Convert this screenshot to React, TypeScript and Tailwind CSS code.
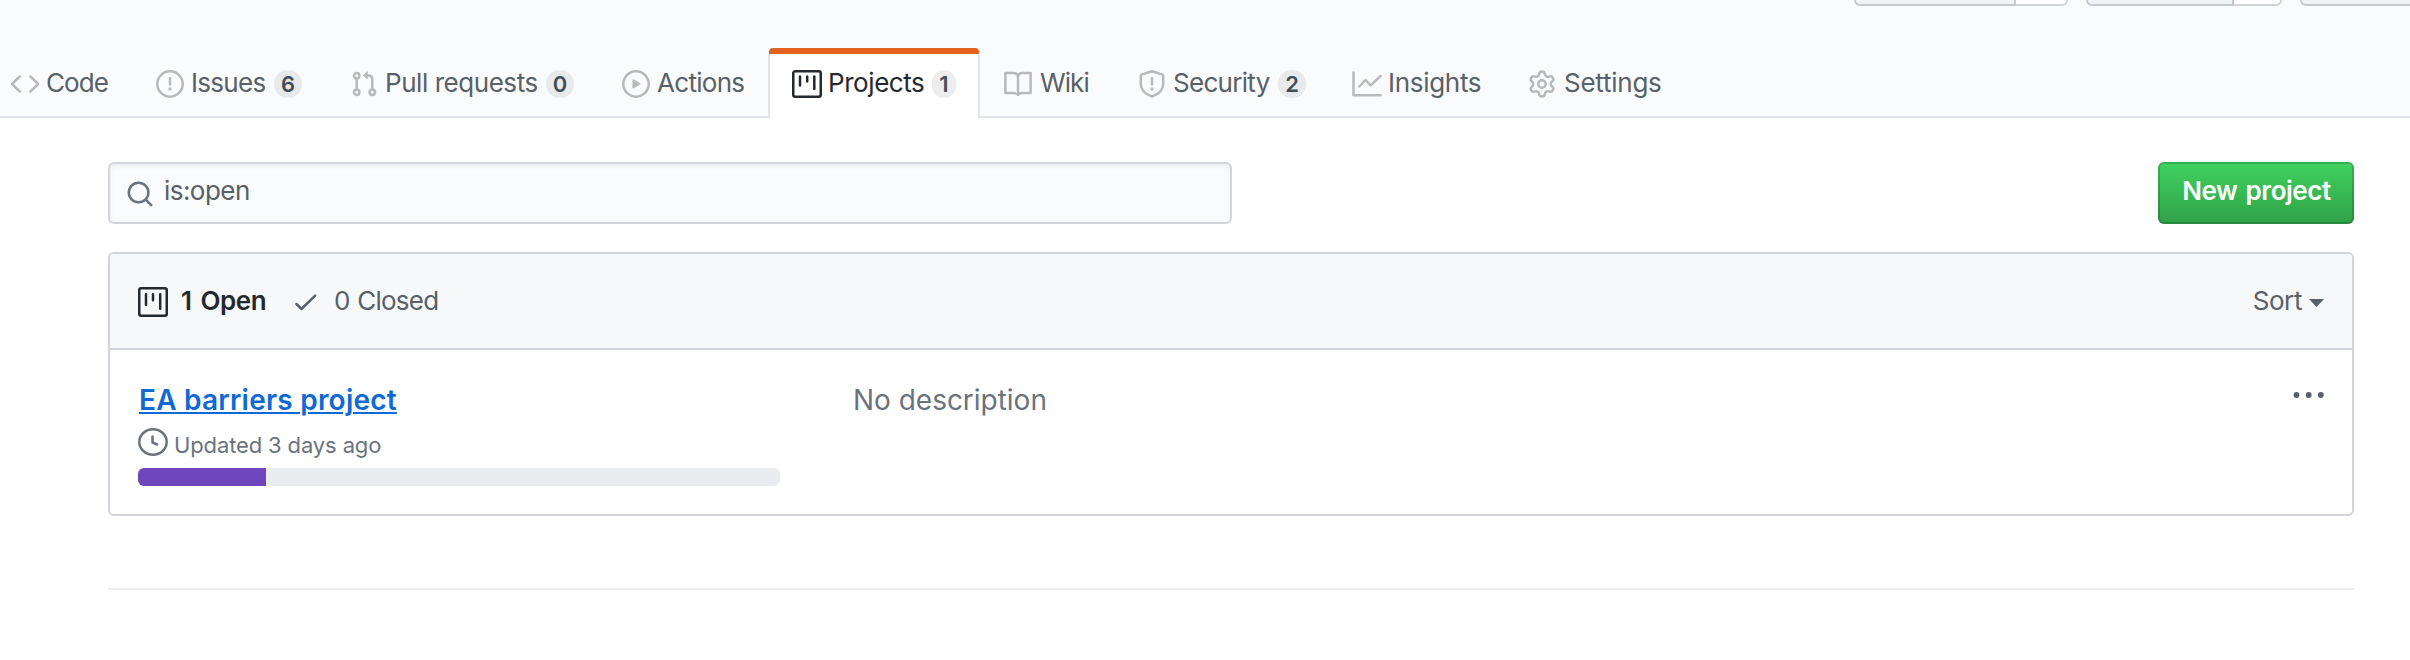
import type { ReactNode } from 'react';
import { Settings } from 'lucide-react';

function Icon({ w, children, className = '' }: { w: number; children: ReactNode; className?: string }) {
  return (
    <svg
      width={w}
      height={30}
      viewBox={`0 0 ${w} 30`}
      fill="none"
      stroke="currentColor"
      strokeWidth={2.5}
      strokeLinecap="round"
      strokeLinejoin="round"
      className={`block shrink-0 ${className}`}
    >
      {children}
    </svg>
  );
}

type Tab = {
  label: string;
  item: string;
  text: string;
  icon: ReactNode;
  count?: string;
  badge?: string;
  active?: boolean;
};

const tabs: Tab[] = [
  {
    label: 'Code',
    item: 'w-[146px]',
    text: 'ml-[6px] tracking-[-0.9px]',
    icon: (
      <Icon w={30}>
        <path d="M9.8 7.5 2 15l7.8 7.5M20.4 7.5 28.2 15l-7.8 7.5" />
      </Icon>
    ),
  },
  {
    label: 'Issues',
    item: 'w-[194px]',
    text: 'ml-[7px] w-[83px] tracking-[-0.7px]',
    count: '6',
    badge: 'w-7',
    icon: (
      <Icon w={28}>
        <circle cx="14" cy="15" r="12.7" />
        <path d="M14 9.2v6.3" />
        <circle cx="14" cy="20" r="1.7" fill="currentColor" stroke="none" />
      </Icon>
    ),
  },
  {
    label: 'Pull requests',
    item: 'w-[272px]',
    text: 'ml-[7px] w-[161px] tracking-[-0.45px]',
    count: '0',
    badge: 'w-7',
    icon: (
      <Icon w={28}>
        <circle cx="6.7" cy="6.7" r="2.7" />
        <circle cx="6.7" cy="23.3" r="2.7" />
        <circle cx="22.3" cy="23.3" r="2.7" />
        <path d="M6.7 9.8v10.5M22.3 20.3v-9.8q0-4-4-4h-1.5" />
        <path d="m17 3-3.5 3.3L17 9.6z" fill="currentColor" strokeWidth={1} />
      </Icon>
    ),
  },
  {
    label: 'Actions',
    item: 'w-[146px]',
    text: 'ml-[7px] tracking-[-0.7px]',
    icon: (
      <Icon w={28}>
        <circle cx="14" cy="15" r="12.7" />
        <path d="M11 10.8v8.4l7-4.2z" fill="currentColor" strokeWidth={1} />
      </Icon>
    ),
  },
  {
    label: 'Projects',
    item: '',
    text: 'ml-[6px] w-[104px] tracking-[-0.43px]',
    count: '1',
    badge: 'w-6',
    active: true,
    icon: (
      <Icon w={30}>
        <rect x="1.25" y="2.25" width="27.5" height="25.5" rx="2" />
        <path d="M8 7.5v9M15.2 7.5v5M22.3 7.5v12.5" />
      </Icon>
    ),
  },
  {
    label: 'Wiki',
    item: 'ml-6 w-[134px]',
    text: 'ml-[8px] tracking-[-0.9px]',
    icon: (
      <Icon w={28}>
        <path d="M14 7q-1-3-4-3H1.400v20H10q3 0 4 1.800Q15 24 18 24h8.600V4H18q-3 0-4 3v18" />
      </Icon>
    ),
  },
  {
    label: 'Security',
    item: 'w-[214px]',
    text: 'ml-[7px] w-[105px] tracking-[-0.7px]',
    count: '2',
    badge: 'w-7',
    icon: (
      <Icon w={28}>
        <path d="M14 2.300 3.500 5.600Q2.800 5.800 2.800 6.800v8.200c0 6 4.200 10 11.200 12.500 7-2.500 11.200-6.500 11.200-12.500V6.800q0-1-.7-1.200z" />
        <path d="M14 9.300v6" />
        <circle cx="14" cy="20" r="1.600" fill="currentColor" stroke="none" />
      </Icon>
    ),
  },
  {
    label: 'Insights',
    item: 'w-[175px]',
    text: 'ml-[6px] tracking-[-0.3px]',
    icon: (
      <Icon w={30}>
        <path d="M1.500 3.500v22.800H28.700M7.300 17.500l6.200-6.500 5 5.300L28.700 7" />
      </Icon>
    ),
  },
  {
    label: 'Settings',
    item: '',
    text: 'ml-[7px] tracking-[-0.25px]',
    icon: <Settings size={30} strokeWidth={2} className="block shrink-0" />,
  },
];

function NavTab({ tab }: { tab: Tab }) {
  const content = (
    <>
      <span className={tab.active ? 'shrink-0' : 'shrink-0 text-[#b8b9bb]'}>{tab.icon}</span>
      <span className={`shrink-0 whitespace-nowrap text-[26px] leading-[27px] ${tab.text}`}>{tab.label}</span>
      {tab.count && (
        <span
          className={`mt-px h-7 shrink-0 rounded-full bg-[rgba(27,31,35,0.08)] text-center text-[22px] leading-7 font-semibold text-[#444d56] ${tab.badge}`}
        >
          {tab.count}
        </span>
      )}
    </>
  );
  if (tab.active) {
    return (
      <a className="flex h-[70px] w-[212px] shrink-0 flex-col text-[#24292e]">
        <span className="mx-px h-[6px] shrink-0 rounded-t-[4px] bg-[#e36220]" />
        <span className="flex grow items-start border-x-2 border-[#e1e4e8] bg-white pt-[15px] pl-[22px]">{content}</span>
      </a>
    );
  }
  return <a className={`flex h-[70px] shrink-0 items-start pt-[21px] text-[#586069] ${tab.item}`}>{content}</a>;
}

function TopButton({ left, right }: { left: string; right: string }) {
  return (
    <div className="flex h-[6px] shrink-0">
      <span className={`rounded-bl-[6px] border-2 border-t-0 border-[#c6c9cd] bg-[#eff3f6] ${left}`} />
      <span className={`rounded-br-[6px] border-r-2 border-b-2 border-[#d1d3d5] bg-white ${right}`} />
    </div>
  );
}

export default function App() {
  return (
    <div className="h-[660px] w-[2410px] overflow-hidden bg-white font-['Inter','Liberation_Sans',sans-serif]">
      <header className="flex h-[118px] flex-col justify-between bg-[#fafbfc]">
        <div className="flex gap-[18px] overflow-hidden pl-[1854px]">
          <TopButton left="w-[162px]" right="w-[52px]" />
          <TopButton left="w-[148px]" right="w-[48px]" />
          <TopButton left="w-[150px]" right="w-[48px]" />
        </div>
        <nav className="flex h-[70px] bg-[linear-gradient(to_top,#e1e4e8_2px,transparent_2px)] pl-[10px]">
          {tabs.map((t) => (
            <NavTab key={t.label} tab={t} />
          ))}
        </nav>
      </header>

      <main className="mt-11 ml-[108px] w-[2246px]">
        <div className="flex items-center justify-between">
          <div className="flex h-[62px] w-[1124px] items-start rounded-[6px] border-2 border-[#d1d5da] bg-[#fafbfc] pt-[13px] pl-[16px] text-[#586069] shadow-[inset_0_2px_4px_rgba(27,31,35,0.075)]">
            <Icon w={28} className="mt-[2px] text-[#6a737d]">
              <circle cx="12.600" cy="13.500" r="9.800" />
              <path d="m19.700 20.700 5.500 5.500" />
            </Icon>
            <span className="ml-[10px] text-[26px] leading-[27px] tracking-[-0.55px]">is:open</span>
          </div>
          <button className="flex h-[62px] w-[196px] items-start justify-center rounded-[6px] border-2 border-[rgba(27,31,35,0.2)] bg-[linear-gradient(to_bottom,#40d35f,#2fa147)] bg-origin-border pt-[13px] pl-px text-[26px] leading-[27px] font-semibold tracking-[-0.45px] [word-spacing:2px] text-white">
            New project
          </button>
        </div>

        <section className="mt-7 h-[264px] overflow-hidden rounded-[6px] border-2 border-[#d1d5da]">
          <div className="flex h-[96px] items-start border-b-2 border-[#d1d5da] bg-[#f6f8fa] pt-[32px] pr-[28px] pl-[28px] text-[26px] leading-[30px] text-[#586069]">
            <Icon w={30} className="mt-px text-[#24292e]">
              <rect x="1.250" y="1.250" width="27.500" height="27.500" rx="2" />
              <path d="M8 7.300v10.500M15 7.300v6M22.200 7.300v14.500" />
            </Icon>
            <span className="ml-[13px] w-[113px] font-semibold tracking-[-0.5px] text-[#24292e] [word-spacing:3px]">
              1 Open
            </span>
            <Icon w={24} className="mt-px">
              <path d="m2.500 17 5 5L21.200 8.700" />
            </Icon>
            <span className="ml-[16px] tracking-[-0.75px] [word-spacing:1px]">0 Closed</span>
            <span className="ml-auto tracking-[-0.4px]">Sort</span>
            <svg width="15" height="8" viewBox="0 0 15 8" className="mt-[13px] ml-[7px] block" fill="currentColor">
              <path d="M0 0h15L7.500 8z" />
            </svg>
          </div>

          <div className="flex h-[164px] items-start pt-[29px] pl-[28px] text-[#6a737d]">
            <div className="w-[642px]">
              <a className="ml-px block text-[28px] leading-[42px] font-semibold tracking-[0.23px] text-[#0f69d6] underline decoration-2 underline-offset-2">
                EA barriers project
              </a>
              <div className="mt-[6px] flex h-[30px]">
                <Icon w={30}>
                  <ellipse cx="15" cy="15" rx="13.700" ry="12.700" />
                  <path d="M14.500 9.500v6l4.700 2" />
                </Icon>
                <span className="mt-[3px] ml-[6px] text-[22px] leading-[30px] tracking-[-0.13px]">Updated 3 days ago</span>
              </div>
              <div className="mt-[11px] h-[18px] overflow-hidden rounded-[6px] bg-[#eaecef]">
                <div className="h-full w-[128px] bg-[#6f46bd]" />
              </div>
            </div>
            <span className="ml-[73px] text-[28px] leading-[42px] tracking-[-0.02px]">No description</span>
            <svg width="32" height="8" viewBox="0 0 32 8" className="mt-[12px] mr-[28px] ml-auto block" fill="#586069">
              <circle cx="4.500" cy="4" r="2.900" />
              <circle cx="16.700" cy="4" r="2.900" />
              <circle cx="28.800" cy="4" r="2.900" />
            </svg>
          </div>
        </section>

        <div className="mt-[72px] h-[2px] bg-[#eaecef]" />
      </main>
    </div>
  );
}
